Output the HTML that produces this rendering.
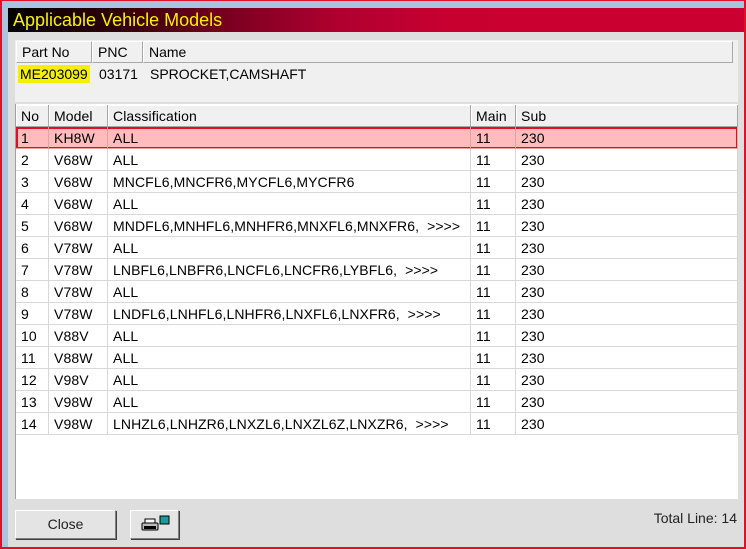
<!DOCTYPE html>
<html><head><style>
*{margin:0;padding:0;box-sizing:border-box}
body{width:746px;height:549px;overflow:hidden;font-family:"Liberation Sans",Arial,sans-serif;font-size:14px;color:#000;background:#dedede;position:relative}
.frame{position:absolute;left:0;top:0;width:746px;height:549px;border:2px solid #e0102a;border-top-width:1px}
.blue{position:absolute;left:2px;top:1px;width:742px;height:7px;background:#a9c4dd}
.blueL{position:absolute;left:2px;top:1px;width:6px;height:546px;background:#a9c4dd}
.title{position:absolute;left:8px;top:8px;width:736px;height:24px;background:linear-gradient(90deg,#000 0%,#300008 15%,#7a0020 30%,#b00030 45%,#c80030 60%,#cc0030 100%);color:#f6f200;font-size:18px;line-height:24px;padding-left:5px}
.hl{position:absolute;background:#f4f000}
.top{position:absolute;left:15px;top:40px;width:723px;height:62px;background:#f0f0f0}
.hc{position:absolute;top:1px;height:22px;border:1px solid #a8a8a8;border-left-color:#fff;border-top-color:#fff;line-height:20px;padding-left:5px;background:#f0f0f0}
.grid{position:absolute;left:15px;top:104px;width:723px;height:395px;background:#fff;border-left:1px solid #a0a0a0}
.row{position:absolute;left:0;width:722px;height:22px}
.c{position:absolute;top:0;height:22px;line-height:22px;padding-left:5px;border-right:1px solid #d8d8d8;border-bottom:1px solid #d8d8d8;white-space:nowrap;letter-spacing:0.1px}
.hdr .c{background:#f0f0f0;border-right:1px solid #a8a8a8;border-bottom:1px solid #a8a8a8;box-shadow:inset 1px 1px #fff}
.sel{background:#ffbcbc;outline:2px solid #e01020;outline-offset:-2px}
.sel .c{border-color:#e8a0a0}
.btn{position:absolute;top:510px;height:29px;background:#e4e4e4;border:1px solid;border-color:#fff #808080 #808080 #fff;box-shadow:1px 1px #404040;text-align:center;line-height:27px;font-size:14px;color:#222}
</style></head><body>
<div class="blue"></div><div class="blueL"></div>
<div class="frame"></div>
<div class="title">Applicable Vehicle Models</div>
<div class="top">
<div class="hc" style="left:1px;width:76px">Part No</div>
<div class="hc" style="left:77px;width:51px">PNC</div>
<div class="hc" style="left:128px;width:590px">Name</div>
<div class="hl" style="left:3px;top:25px;width:72px;height:18px"></div>
<div style="position:absolute;left:5px;top:26px">ME203099</div>
<div style="position:absolute;left:84px;top:26px">03171</div>
<div style="position:absolute;left:135px;top:26px">SPROCKET,CAMSHAFT</div>
</div>
<div class="grid">
<div class="row hdr" style="top:1px"><div class="c" style="left:0;width:33px">No</div><div class="c" style="left:33px;width:59px">Model</div><div class="c" style="left:92px;width:363px">Classification</div><div class="c" style="left:455px;width:45px">Main</div><div class="c" style="left:500px;width:222px">Sub</div></div>
<div id="rows"></div>
</div>
<div class="btn" style="left:15px;width:101px">Close</div>
<div class="btn" style="left:130px;width:49px">
<svg width="30" height="20" viewBox="0 0 30 20" style="margin-top:4px"><rect x="5" y="4" width="10" height="5" fill="#fff" stroke="#000"/><rect x="2" y="8" width="16" height="7" rx="1" fill="#bbb" stroke="#000"/><rect x="4" y="11" width="12" height="3" fill="#000"/><rect x="20" y="1" width="9" height="8" fill="#1a9a9a" stroke="#000"/></svg></div>
<div style="position:absolute;right:9px;top:510px;font-size:14px;color:#222">Total Line: 14</div>
<script>
var d=[["1","KH8W","ALL"],["2","V68W","ALL"],["3","V68W","MNCFL6,MNCFR6,MYCFL6,MYCFR6"],["4","V68W","ALL"],["5","V68W","MNDFL6,MNHFL6,MNHFR6,MNXFL6,MNXFR6,&nbsp; &gt;&gt;&gt;&gt;"],["6","V78W","ALL"],["7","V78W","LNBFL6,LNBFR6,LNCFL6,LNCFR6,LYBFL6,&nbsp; &gt;&gt;&gt;&gt;"],["8","V78W","ALL"],["9","V78W","LNDFL6,LNHFL6,LNHFR6,LNXFL6,LNXFR6,&nbsp; &gt;&gt;&gt;&gt;"],["10","V88V","ALL"],["11","V88W","ALL"],["12","V98V","ALL"],["13","V98W","ALL"],["14","V98W","LNHZL6,LNHZR6,LNXZL6,LNXZL6Z,LNXZR6,&nbsp; &gt;&gt;&gt;&gt;"]];
var h="";d.forEach(function(r,i){h+='<div class="row'+(i==0?' sel':'')+'" style="top:'+(23+i*22)+'px"><div class="c" style="left:0;width:33px">'+r[0]+'</div><div class="c" style="left:33px;width:59px">'+r[1]+'</div><div class="c" style="left:92px;width:363px">'+r[2]+'</div><div class="c" style="left:455px;width:45px">11</div><div class="c" style="left:500px;width:222px">230</div></div>';});
document.getElementById("rows").outerHTML=h;
</script>
</body></html>
